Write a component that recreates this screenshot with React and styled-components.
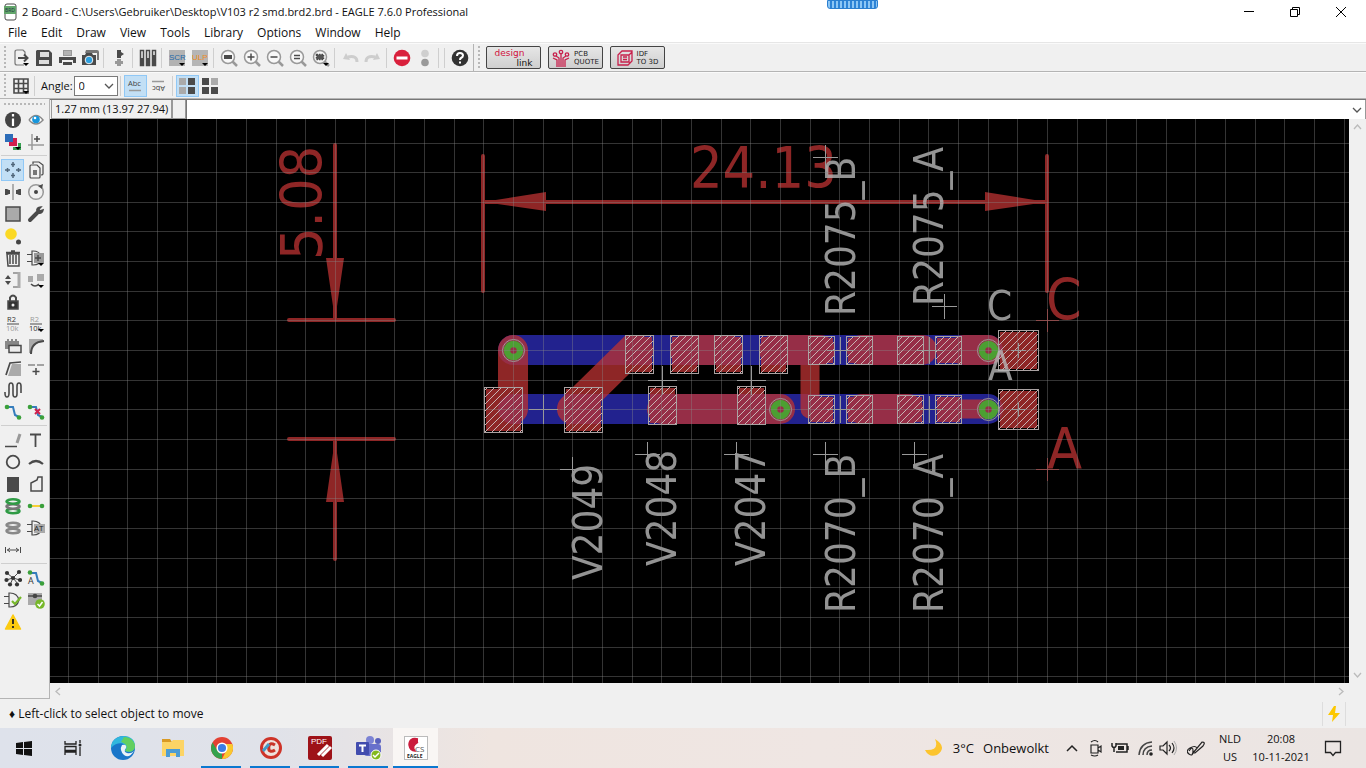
import React from "react";
import styled, { createGlobalStyle } from "styled-components";

const Global = createGlobalStyle`
  * { box-sizing: border-box; }
  body { margin: 0; background: #f0f0f0; color: #111; font: 12px/16px "Open Sans", "Noto Sans", sans-serif; }
  button, input, select { font: inherit; color: inherit; }
  svg { display: block; }
`;

const Shell = styled.div`display: flex; flex-direction: column; min-height: 100vh;`;
const TitleBar = styled.header`
  display: flex; align-items: center; height: 24px; padding: 0 2px 0 4px; background: #fff; position: relative;
`;
const Title = styled.h1`margin: 0 0 0 5px; flex: 1; font-size: 11px; line-height: 16px; font-weight: 400; white-space: nowrap;`;
const DragGrip = styled.div`
  position: absolute; top: 0; left: 827px; width: 51px; height: 9px; border-radius: 0 0 3px 3px; border: 1px solid #2b7fd0;
  background: repeating-linear-gradient(90deg, #8cc6f5 0 2px, #2d83d6 2px 4px);
`;
const WindowButton = styled.button`
  width: 46px; height: 22px; border: 0; padding: 0; background: none; display: grid; place-items: center;
`;
const MenuBar = styled.nav`display: flex; height: 19px; padding-left: 1px; background: #fff; border-bottom: 1px solid #e6e6e6;`;
const MenuButton = styled.button`border: 0; background: none; padding: 0 7px; line-height: 18px;`;
const ToolBar = styled.div`
  display: flex; align-items: center; height: ${p => p.$height}px; border-bottom: 1px solid #b4b4b4; border-top: 1px solid #fafafa;
`;
const Handle = styled.i`
  width: 2px; height: 23px; margin: 0 3px 0 4px; flex: none;
  background: repeating-linear-gradient(180deg, #b8b8b8 0 2px, transparent 2px 4px);
`;
const Tool = styled.button`
  width: 23px; height: 22px; padding: 0; flex: none; display: grid; place-items: center;
  border: 1px solid ${p => (p.$on ? "#90c8f6" : "transparent")}; background: ${p => (p.$on ? "#c2dff5" : "none")};
`;
const Sep = styled.i`width: 1px; height: 20px; margin: 0 3px 0 2px; flex: none; background: #cfcfcf;`;
const GroupEnd = styled.i`width: 1px; height: 27px; margin-left: 2px; background: #b4b4b4;`;
const LinkButton = styled.button`
  display: flex; align-items: center; justify-content: center; gap: 4px; width: 55px; height: 23px; margin-right: 7px; padding: 0;
  border: 1px solid #444; border-radius: 2px; background: linear-gradient(#e6e6e6, #cfcfcf);
  font: 7px/8px "DejaVu Sans", sans-serif; text-align: left; color: #222;
`;
const LinkWords = styled.span`display: flex; flex-direction: column;`;
const DesignWords = styled(LinkWords)`
  width: 38px; font-size: 9px; line-height: 10px; color: #d0103c;
  b { align-self: flex-end; font-weight: 400; color: #111; }
`;
const LinkGap = styled.i`width: 3px;`;
const AngleLabel = styled.label`margin: 0 1px 0 3px; font-size: 11px;`;
const AngleBox = styled.span`
  position: relative; display: flex; width: 44px; height: 20px;
  svg { position: absolute; right: -2px; top: 7px; pointer-events: none; }
`;
const AngleSelect = styled.select`
  appearance: none; width: 100%; border: 1px solid #7a7a7a; border-radius: 0; padding: 0 4px; background: #fff; font-size: 11px;
`;
const Work = styled.div`display: flex; flex: 1;`;
const SideBar = styled.aside`
  width: 50px; flex: none; padding: 2px 2px 0 1px; border-right: 1px solid #b4b4b4; border-bottom: 1px solid #b4b4b4; margin-bottom: 1px;
`;
const SideHandle = styled.div`
  height: 2px; margin: 2px 2px 4px 3px; background: repeating-linear-gradient(90deg, #b8b8b8 0 2px, transparent 2px 4px);
`;
const SideGroup = styled.div`
  display: grid; grid-template-columns: 23px 23px; grid-auto-rows: 22px;
  & + & { border-top: 1px solid #cfcfcf; margin-top: 2px; padding-top: 3px; }
`;
const Main = styled.main`display: flex; flex-direction: column; flex: 1; min-width: 0;`;
const CommandRow = styled.div`display: flex; height: 20px; border-top: 1px solid #777;`;
const Coordinates = styled.output`
  width: 121px; padding: 0 3px; border: 1px solid #999; border-top: 0; font-size: 11px; line-height: 18px; white-space: nowrap; margin-left: 1px;
`;
const CommandMark = styled.i`width: 14px; border: 1px solid #999; border-top: 0;`;
const CommandInput = styled.input`flex: 1; min-width: 0; border: 0; border-left: 1px solid #777; padding: 0 4px; background: #fff; outline: 0;`;
const DropButton = styled.button`width: 18px; border: 0; border-right: 1px solid #999; padding: 0; background: #fff; display: grid; place-items: center;`;
const ViewRow = styled.div`display: flex; flex: 1;`;
const Board = styled.div`
  flex: 1; min-width: 0; background: #000; overflow: hidden; display: flex;
  svg { flex: 1; height: auto; min-width: 0; }
`;
const VScroll = styled.div`width: 17px; display: flex; flex-direction: column; justify-content: space-between;`;
const HScroll = styled.div`height: 17px; display: flex; justify-content: space-between; padding-right: 17px;`;
const ScrollButton = styled.button`width: 17px; height: 17px; border: 0; padding: 0; background: none; display: grid; place-items: center;`;
const Status = styled.footer`display: flex; align-items: center; justify-content: space-between; height: 28px; padding: 0 20px 0 9px;`;
const Bolt = styled.span`height: 24px; padding: 0 3px; border: solid #ddd; border-width: 0 1px; display: grid; place-items: center;`;
const TaskBar = styled.nav`
  display: flex; height: 40px; background: linear-gradient(90deg, #dee2eb 0, #e0e2e9 20%, #efe5e0 36%, #efe6e3 60%, #ebe5e3 100%);
`;
const TaskButton = styled.button`
  width: ${p => p.$width || 49}px; height: 40px; padding: 0; border: 0; display: grid; place-items: center;
  background: ${p => (p.$active ? "#f9f6f4" : "none")}; position: relative;
  &::after { content: ""; position: absolute; bottom: 0; left: ${p => (p.$active ? 0 : 4)}px; right: ${p => (p.$active ? 0 : 5)}px; height: ${p => (p.$open ? 2 : 0)}px; background: #0b78d0; }
`;
const Tray = styled.div`display: flex; align-items: center; margin-left: auto; padding-right: 15px;`;
const TrayButton = styled.button`width: ${p => p.$width || 24}px; height: 40px; padding: 0; border: 0; background: none; display: grid; place-items: center;`;
const Weather = styled.button`display: flex; align-items: center; gap: 9px; padding: 0; border: 0; background: none; margin-right: 12px; font-size: 13px;`;
const Stack = styled.button`
  display: flex; flex-direction: column; align-items: center; width: ${p => p.$width}px; padding: 0; border: 0; background: none; font-size: 11px; line-height: 18px; white-space: nowrap;
`;

const Ico = ({ s = 18, w = s, children }) => (
  <svg width={w} height={s} viewBox={`0 0 ${w} ${s}`} fill="none" stroke="#4a4a4a" strokeWidth="1.5" aria-hidden="true">{children}</svg>
);
const Down = () => <path d="M11 14h6l-3 3z" fill="#000" stroke="none" />;
const F = p => <path stroke="none" fill={p.c || "#4a4a4a"} d={p.d} />;
const Dot = ({ x, y, r = 2.3, c = "#3ba03b" }) => <circle cx={x} cy={y} r={r} fill={c} stroke="none" />;
const Lens = ({ children }) => (
  <Ico><path d="M12 12l5 5" stroke="#999" strokeWidth="2.5" /><circle cx="8" cy="8" r="6.5" stroke="#999" fill="#f8f8f8" />{children}</Ico>
);
const Gate = () => <path d="M5 2h1c5 0 8 3 9 7-1 4-4 7-9 7H5zM0 5.500h5M0 12.500h5" strokeWidth="1.200" />;
const Disks = ({ y, c }) => (
  <g strokeWidth="2.600" stroke={c}><ellipse cx="9" cy={y} rx="6.500" ry="2.200" fill="#f0f0f0" /></g>
);
const Chevron = ({ d, c = "#555", s = 9, w = s }) => <Ico s={s} w={w}><path d={d} stroke={c} strokeWidth="1.300" /></Ico>;

const topTools = [
  ["Open", <Ico><path d="M13 7V3l-2-2H5Q3 1 3 3v11q0 2 2 2h7" strokeWidth="1.200" stroke="#777" /><path d="M6 9h9M12 5.500L15.500 9 12 12.500" strokeWidth="2" /><Down /></Ico>],
  ["Save", <Ico><F d="M1 2l1-1h12l3 3v13H1z" /><F c="#ddd" d="M5 3h9v5H5zM4 11h10v4H4z" /></Ico>],
  ["Print", <Ico><F c="#999" d="M5 1h9v6H5z" /><path d="M6 3h7M6 5h7" stroke="#ccc" strokeWidth="1" /><F d="M1 8h17v6h-3v-3H4v3H1z" /><F d="M5 13h9v3H5z" /></Ico>],
  ["Export", <Ico><F c="#777" d="M5 1h11q2 0 2 2v8h-2V4H4z" /><F d="M1 6h3l1-2h6l1 2h3v10H1z" /><circle cx="8" cy="11" r="3.8" fill="#2da0e0" stroke="#eee" strokeWidth="1" /></Ico>],
  null,
  ["Switch", <Ico><F d="M7 1h4v2l3 2-3 2v2H7z" /><F c="#999" d="M7 10h4v7H7zM5 12h8v3H5z" /></Ico>],
  null,
  ["Library", <Ico><g strokeWidth="1.500" fill="#eee"><rect x="1.500" y="1.500" width="3" height="15" /><rect x="7.500" y="1.500" width="3" height="15" /><rect x="13.500" y="1.500" width="3" height="15" /></g><F d="M1 9h4v7H1zM7 9h4v7H7zM13 6h4v10h-4z" /></Ico>],
  null,
  ["Script", <Ico><F c="#b2b2b2" d="M1 1h16v16H1z" /><text x="1" y="11" fontSize="8" fontFamily="Liberation Sans" stroke="none" fill="#2468a8">SCR</text><Down /></Ico>],
  ["Run ULP", <Ico><F c="#b5b5b5" d="M1 1h16v16H1z" /><text x="1" y="11" fontSize="8" fontFamily="Liberation Sans" stroke="none" fill="#ee8c1c">ULP</text><Down /></Ico>],
  null,
  ["Fit", <Lens><F d="M4 6h8v4H4z" /></Lens>],
  ["Zoom in", <Lens><path d="M8 4.500v7M4.500 8h7" /></Lens>],
  ["Zoom out", <Lens><path d="M4.500 8h7" /></Lens>],
  ["Redraw", <Lens><path d="M5 6.500h6M5 9.500h6" /></Lens>],
  ["Select zoom", <Lens><rect x="4.500" y="5.500" width="7" height="5" fill="#555" strokeDasharray="1.500 1" /><Down /></Lens>],
  null,
  ["Undo", <Ico><path d="M16 13q0-7-9-5" stroke="#cdcdcd" strokeWidth="3" /><F c="#cdcdcd" d="M2 10l3-6 4 7z" /></Ico>],
  ["Redo", <Ico><path d="M2 13q0-7 9-5" stroke="#cdcdcd" strokeWidth="3" /><F c="#cdcdcd" d="M16 10l-3-6-4 7z" /></Ico>],
  null,
  ["Stop", <Ico><circle cx="9" cy="9" r="8.300" fill="#d9203c" stroke="none" /><path d="M3.500 9h11" stroke="#fff" strokeWidth="3" /></Ico>],
  ["Go", <Ico><Dot x={9} y={4.500} r={3.800} c="#cfcfcf" /><Dot x={9} y={13.500} r={3.800} c="#999" /></Ico>],
  null, null,
  ["Help", <Ico><circle cx="9" cy="9" r="8.300" fill="#333" stroke="none" /><path d="M6 7q0-3 3-3t3 2.500q0 1.500-2 2.500-1 .5-1 2M9 12.500v2" stroke="#fff" strokeWidth="2" /></Ico>],
];

const GridIcon = <Ico><path d="M2 2h14v14H2zM2 6.500h14M2 11.500h14M6.500 2v14M11.500 2v14" strokeWidth="1.600" /><Down /></Ico>;

const side = [
  [
    ["Info", <Ico><circle cx="9" cy="9" r="8" fill="#444" stroke="none" /><path d="M9 7.500V15M9 3v2.500" stroke="#fff" strokeWidth="2.200" /></Ico>],
    ["Show", <Ico><path d="M2 9q7-9 14 0-7 8-14 0" stroke="#888" fill="#fff" /><circle cx="9" cy="8.500" r="3.800" fill="#1696dc" stroke="none" /><Dot x={8} y={7} r={1.300} c="#fff" /></Ico>],
    ["Display", <Ico><F c="#d0204c" d="M9 5h4v8H5V9h4z" /><F c="#35a050" d="M14 10h3v7H9v-3h5z" /><F c="#2c6cb8" d="M1 1h8v8H1z" /><Down /></Ico>],
    ["Mark", <Ico><path d="M5 1v16M1 12h16" stroke="#999" /><path d="M10 3v6M7 6h6" /></Ico>],
  ],
  [
    ["Move", <Ico><path d="M9 1v5M9 12v5M1 9h5M12 9h5M7 3.500h4M7 14.500h4M3.500 7v4M14.500 7v4" stroke="#50667a" /></Ico>, true],
    ["Copy", <Ico><path d="M6 3V1h6l4 3v9q0 1-2 1" strokeWidth="1.200" /><path d="M3 5q0-1 1-1h6l3 3v9q0 1-1 1H4q-1 0-1-1z" strokeWidth="1.200" /><F c="#777" d="M6 9h4v5H6z" /></Ico>],
    ["Mirror", <Ico><path d="M9 1v16" stroke="#999" /><F d="M1 6h2l2 1h1v4H5l-2 1H1zM17 6h-2l-2 1h-1v4h1l2 1h2z" /></Ico>],
    ["Rotate", <Ico><circle cx="9" cy="9" r="7.300" stroke="#999" /><Dot x={9} y={9} r={2} c="#444" /><F d="M11 3l5-2-1 5z" /></Ico>],
    ["Group", <Ico><rect x="2" y="2" width="14" height="14" fill="#aaa" /></Ico>],
    ["Change", <Ico><path d="M3 15l7-7" strokeWidth="4" strokeLinecap="round" /><path d="M14 2q-5 0-4 5l1 1q4 1 5-3l-3 1-1-2z" fill="#4a4a4a" /></Ico>],
    ["Paste", <Ico><Dot x={7} y={7} r={5.800} c="#fbd924" /><Dot x={14.500} y={15} r={2.500} c="#444" /></Ico>],
    null,
    ["Delete", <Ico><path d="M3 5h12v12H4zM2 3.500h14M7 2h4M6 6v9M9 6v9M12 6v9" /></Ico>],
    ["Add", <Ico><Gate /><F c="#999" d="M7 4h10v10H7z" /><path d="M11 6v6M8 9h6" /><Down /></Ico>],
    ["Pinswap", <Ico><path d="M9 2h6v14H9" stroke="#888" /><path d="M15 1v16" stroke="#aaa" strokeWidth="3" /><F d="M1 8l3-4 3 4zM1 10h6l-3 4z" /></Ico>],
    ["Replace", <Ico><F c="#aaa" d="M1 5h5v6H1zM10 3h7v7h-7z" /><path d="M4 13q4 4 8 0" /><Down /></Ico>],
    ["Lock", <Ico><rect x="4" y="8" width="10" height="8" fill="#333" /><path d="M6 8V4.500q3-4 6 0V8" strokeWidth="2" /><Dot x={9} y={12} r={1.500} c="#eee" /></Ico>],
    null,
    ["Name", <Ico><text x="3" y="7" fontSize="7.500" stroke="none" fill="#333">R2</text><path d="M3 9h12" strokeWidth="1" /><text x="2" y="16" fontSize="7.500" stroke="none" fill="#999">10k</text></Ico>],
    ["Value", <Ico><text x="3" y="7" fontSize="7.500" stroke="none" fill="#999">R2</text><path d="M3 9h12" strokeWidth="1" /><text x="2" y="16" fontSize="7.500" stroke="none" fill="#333">10k</text><Down /></Ico>],
    ["Smash", <Ico><F c="#888" d="M1 4h2V2h2v2h2V2h2v2h2V2h2v2h2v8H1z" /><rect x="5" y="8.500" width="12" height="7" fill="#eee" /></Ico>],
    ["Miter", <Ico><F c="#aaa" d="M2 2h14v3Q5 6 4 16H2z" /><path d="M4 17Q4 5 17 4" strokeWidth="2" /></Ico>],
    ["Split", <Ico><F c="#aaa" d="M8 5h9v12H4z" /><path d="M2 16L6 4l11-1" strokeWidth="1.700" /></Ico>],
    ["Optimize", <Ico><path d="M1 6h7M10 6h7" stroke="#888" /><path d="M9 9v7M5.500 12.500h7" /></Ico>],
    ["Meander", <Ico><path d="M1 11v1q0 4 2 4t2-4V5q0-3 2-3t2 3v8q0 3 2 3t2-3V5q0-3 2-3t2 3v7" strokeWidth="1.600" /></Ico>],
    null,
    ["Route", <Ico><path d="M3 4h6l2 8 4 2" stroke="#347cbc" strokeWidth="2" /><Dot x={3} y={4} /><Dot x={15} y={14.500} /></Ico>],
    ["Ripup", <Ico><path d="M3 4h6l2 8 4 2" stroke="#347cbc" strokeWidth="2" /><Dot x={3} y={4} /><Dot x={15} y={14.500} /><path d="M8 6l5 5M13 6l-5 5" stroke="#d0204c" strokeWidth="2" /></Ico>],
  ],
  [
    ["Wire", <Ico><path d="M1 15.500h12" /><path d="M13 12l3-9" stroke="#999" strokeWidth="3" /></Ico>],
    ["Text", <Ico><path d="M3 3.500h11M8.500 3v13" strokeWidth="1.800" /></Ico>],
    ["Circle", <Ico><circle cx="9" cy="9" r="6.300" strokeWidth="1.800" /></Ico>],
    ["Arc", <Ico><path d="M2 11q7-6 14 0" strokeWidth="2.200" /></Ico>],
    ["Rectangle", <Ico><F d="M3 2h12v15H3z" /></Ico>],
    ["Polygon", <Ico><path d="M4 16V8l6-3 1-3h4v14z" /></Ico>],
    ["Via", <Ico><Disks y={14} c="#2f9b45" /><Disks y={9.500} c="#777" /><Disks y={4.500} c="#2f9b45" /></Ico>],
    ["Signal", <Ico><path d="M3 9h12" stroke="#f7cf35" strokeWidth="2" /><Dot x={3} y={9} /><Dot x={15} y={9} /></Ico>],
    ["Hole", <Ico><Disks y={12} c="#888" /><Disks y={6} c="#888" /></Ico>],
    ["Attribute", <Ico><Gate /><F c="#aaa" d="M7 5h11v9H7z" /><text x="7" y="12" fontSize="8" stroke="none" fill="#222">AT</text></Ico>],
    ["Dimension", <Ico><path d="M1.500 6v6M16.500 6v6M3 9h12M6 7L3.500 9 6 11M12 7l2.500 2L12 11" strokeWidth="1" /></Ico>],
    null,
  ],
  [
    ["Ratsnest", <Ico><path d="M3 4l6 5 6-6M2 11l7-2 7 2M6 16l3-7 5 6" strokeWidth="1" />{[[3, 4], [15, 3], [9, 9], [2.500, 11], [16, 11], [6, 15.500], [13, 15.500]].map(([x, y]) => <Dot key={x} x={x} y={y} r={2.100} c="#333" />)}</Ico>],
    ["Autorouter", <Ico><path d="M4 4h5l2 8 4 2" stroke="#347cbc" strokeWidth="2" /><Dot x={3} y={3.500} /><Dot x={15} y={14.500} /><text x="1" y="15" fontSize="9" stroke="none" fill="#333">A</text></Ico>],
    ["ERC", <Ico><Gate /><path d="M8 10l3 3 6-7" stroke="#77b82a" strokeWidth="2.200" /></Ico>],
    ["DRC", <Ico><F c="#aaa" d="M1 2h14v12H1z" /><path d="M1 5h14" /><Dot x={8} y={5} r={2.300} c="#444" /><Dot x={13} y={13} r={4.800} c="#77b82a" /><path d="M10.500 13l2 2 3-4" stroke="#fff" /></Ico>],
    ["Errors", <Ico><path d="M9 2l7.500 14h-15z" fill="#fccb10" stroke="#fccb10" strokeLinejoin="round" /><path d="M9 6v5M9 13v2" stroke="#222" strokeWidth="1.800" /></Ico>],
  ],
];

/* Board geometry, in drawing units that start at the top left corner of the window. */
const gridX = Array.from({ length: 90 }, (_, k) => Math.floor(68.4 + 29.67 * k) + 0.5);
const gridY = Array.from({ length: 60 }, (_, k) => Math.floor(143 + 29.65 * k) + 0.5);
const pads = [
  [484, 387, 38, 45], [564, 387, 38, 45],
  [625, 335, 28, 38], [670, 335, 28, 38], [714, 335, 28, 38], [759, 335, 28, 38],
  [648, 386, 28, 38], [737, 386, 28, 38],
  ...[808, 846, 897, 935].flatMap(x => [[x, 336, 26, 28], [x, 395, 26, 28]]),
  [998, 330, 40, 40], [998, 389, 40, 40],
];
const crosses = [
  [543, 409, 14], [662, 380, 14], [751, 380, 14], [840, 350, 13], [840, 409, 13], [929, 350, 13], [929, 409, 13],
  [1018, 350, 7], [1018, 409, 7], [572, 469, 12], [647, 454, 12], [736, 454, 12], [825, 454, 12], [914, 454, 12], [825, 157, 12], [944, 306, 12],
];
const names = [
  ["R2075_B", 855, 316], ["R2075_A", 943, 306], ["V2049", 602, 580], ["V2048", 676, 566], ["V2047", 765, 566],
  ["R2070_B", 855, 613], ["R2070_A", 943, 613],
];
const vias = [[513, 350], [780, 409], [988, 350], [988, 409]];
const cross = ([x, y, r]) => `M${x - r} ${y + 0.5}h${2 * r + 1}M${x + 0.5} ${y - r}v${2 * r + 1}`;
const boardFont = '"DejaVu Sans Condensed", "DejaVu Sans", sans-serif';

function BoardDrawing() {
  return (
    <svg role="img" aria-label="Board layout">
      <defs>
        <pattern id="hatch" width="7" height="7" patternUnits="userSpaceOnUse">
          <path d="M-1 8L8-1M-1 1l2-2M6 8l2-2" stroke="#c9b4b4" strokeWidth="1" />
        </pattern>
      </defs>
      <g transform="translate(-50 -119)">
        <g stroke="#22228e" strokeWidth="30" strokeLinecap="round"><path d="M513 350H988M513 409H988" /></g>
        <g opacity=".76" stroke="#bb3232" strokeWidth="30" strokeLinecap="round" fill="none">
          <path d="M513 350V409M572 409L632 350H638M685 350H728M774 350H820M862 350H922M964 350H988M662 409H780M862 409H908" />
          <path d="M810 350V409M949 409H988" strokeWidth="19" />
          <g stroke="none" fill="#bb3232">{pads.map(([x, y, w, h]) => <rect key={`${x}-${y}`} x={x + 2} y={y + 2} width={w - 3} height={h - 3} />)}</g>
        </g>
        <g fill="url(#hatch)" stroke="#aaa2a2">{pads.map(([x, y, w, h]) => <rect key={`${x}-${y}`} x={x + 0.5} y={y + 0.5} width={w} height={h} />)}</g>
        {vias.map(([x, y]) => (
          <g key={`${x}-${y}`} fill="none">
            <circle cx={x + 0.5} cy={y + 0.5} r="11" stroke="#a09898" />
            <circle cx={x + 0.5} cy={y + 0.5} r="6.500" stroke="#4c9f32" strokeWidth="6.500" />
          </g>
        ))}
        <g stroke="#8e2626" strokeWidth="4" strokeLinecap="round">
          <path d="M335 145V320M289 320H394M289 439H394M335 439V559M483 156V291M1047 156V291M483 202H1047" />
          <path stroke="none" fill="#8e2626" d="M335 320L326 258H344zM335 439L326 502H344zM483 202L546 192V211zM1047 202L985 192V211z" />
        </g>
        <g fill="#8e2626" fontFamily={boardFont} fontSize="57">
          <text x="690" y="188">24.13</text>
          <text transform="translate(322 260) rotate(-90)">5.08</text>
          <text x="1046" y="320">C</text><text x="1047" y="469">A</text>
        </g>
        <path d={cross([1047, 320, 11]) + cross([1047, 469, 11])} stroke="#8e2626" />
        <g fill="#b8b8b8" opacity=".8" fontFamily={boardFont} fontSize="40">
          {names.map(([t, x, y]) => <text key={t} transform={`translate(${x} ${y}) rotate(-90)`}>{t}</text>)}
          <text x="987" y="320">C</text><text x="988" y="380">A</text>
        </g>
        <path d={gridX.map(x => `M${x} 119V2000`).join("") + gridY.map(y => `M50 ${y}H2800`).join("")} stroke="#888" strokeOpacity=".38" />
        <path d={crosses.map(cross).join("")} stroke="#999" />
      </g>
    </svg>
  );
}

const tasks = [
  ["Start", 48, <Ico s={16}><F c="#111" d="M0 3l7-1v6H0zM8 2l8-1v7H8zM0 9h7v6l-7-1zM8 9h8v7l-8-1z" /></Ico>],
  ["Task view", 49, <Ico><path d="M1 2v3h11V2M1 16v-3h11v3M1 7.500h11v4H1zM16 1v3M16 8v9" stroke="#222" strokeWidth="1.300" /><Dot x={16} y={6} r={1.500} c="#222" /></Ico>],
  ["Edge", 51, <Ico s={24}><circle cx="12" cy="12" r="12" fill="#1976c9" stroke="none" /><F c="#31b7dd" d="M0 12C0-3 24-4 24 10c0 5-5 7-10 5 4-8-7-11-14-3z" /><F c="#62cf60" d="M13 1c7 0 11 5 11 9 0 5-5 7-10 5 4-5 0-8-4-9z" /><F c="#eaf2f7" d="M11 9q5-1 4 3-3 4 1 5 4 1 7-2-5 8-10 4-5-5-2-10z" /></Ico>],
  ["Files", 49, <Ico s={22}><F c="#d99a24" d="M0 2h8l2 3H0z" /><F c="#fcd465" d="M0 5h9l2-2h11v16H0z" /><F c="#4c9cd3" d="M4 12h14v8h-4v-4H8v4H4z" /></Ico>],
  ["Chrome", 49, <Ico s={22}><circle cx="11" cy="11" r="11" fill="#e34133" stroke="none" /><F c="#34a24d" d="M1.500 5.500L8 16l3-1v7A11 11 0 0 1 1.500 5.500z" /><F c="#fac92e" d="M11 22l5-10-3-5h8.300A11 11 0 0 1 11 22z" /><circle cx="11" cy="11" r="4.800" fill="#3c7de5" stroke="#fff" /></Ico>, true],
  ["CCleaner", 49, <Ico s={22}><circle cx="11" cy="11" r="9.500" fill="#eee2dd" stroke="#ce3328" strokeWidth="3" /><path d="M15 8q-5-3-6 1t1 5 5-1" stroke="#c83428" strokeWidth="3" /><path d="M3 14l6-7" stroke="#439bc8" strokeWidth="3" /></Ico>, true],
  ["PDF", 49, <Ico s={24}><rect width="24" height="24" rx="2" fill="#9e1218" stroke="none" /><text x="3" y="8" fontSize="8" fontFamily="Liberation Sans" stroke="none" fill="#fff">PDF</text><path d="M10 19L20 9M14 20l9-9" stroke="#fff" strokeWidth="3" /></Ico>, true],
  ["Teams", 49, <Ico s={24} w={26}><Dot x={14} y={4} r={4} c="#7c83d4" /><Dot x={22} y={5} r={3} c="#5961bd" /><rect x="8" y="8" width="17" height="12" rx="3" fill="#6870cb" stroke="none" /><rect y="6" width="13" height="13" rx="1" fill="#424cae" stroke="none" /><path d="M3 9.500h7M6.500 9v7" stroke="#fff" strokeWidth="2" /><circle cx="20" cy="19" r="5" fill="#83b91d" stroke="#fff" strokeWidth="1" /><path d="M17 19l2 2 4-4" stroke="#fff" /></Ico>, true],
  ["EAGLE", 45, <Ico s={24}><rect x=".5" y=".5" width="23" height="23" fill="#fff" stroke="#bbb" strokeWidth="1" /><path d="M14 3Q5 1 5 9q1 6 6 6-4-5 3-9" fill="#ca1c3c" stroke="#ca1c3c" /><text x="11" y="16" fontSize="8" stroke="none" fill="#555">CS</text><text x="3" y="22" fontSize="5" fontWeight="700" stroke="none" fill="#222">EAGLE</text></Ico>, true, true],
];

const tray = [
  ["Show hidden icons", 22, <Ico s={14}><path d="M2 10l5-5 5 5" stroke="#222" /></Ico>],
  ["Camera", 25, <Ico><path d="M4 6h7v8H4zM11 9l3-2v6l-3-2M4 3q4-3 7 0M4 16q4 2 7 0" stroke="#222" strokeWidth="1.200" /></Ico>],
  ["Battery", 24, <Ico><path d="M5 5h11v8H5M17 7v4M1 4v3q2 3 4 0V4M3 9v4" stroke="#222" /><F c="#222" d="M7 7h6v4H7z" /></Ico>],
  ["Network", 25, <Ico s={16}><path d="M2 15Q3 3 15 2M6 15q0-8 9-9M10 15q0-5 5-5" stroke="#444" /><Dot x={14} y={14} r={1.800} c="#222" /></Ico>],
  ["Volume", 22, <Ico><path d="M1 7h3l4-4v12l-4-4H1zM10 6q3 3 0 6M13 4q4 5 0 10" stroke="#222" strokeWidth="1.200" /><path d="M15 2q5 7 0 14" stroke="#aaa" strokeWidth="1" /></Ico>],
  ["Pen", 34, <Ico><path d="M2 12q4-6 4 0t-4 3 1-6 7 0M6 14L15 3q4 0 1 4L8 14z" stroke="#222" strokeWidth="1.200" /></Ico>],
];

const menus = ["File", "Edit", "Draw", "View", "Tools", "Library", "Options", "Window", "Help"];

export default function App() {
  return (
    <Shell>
      <Global />
      <TitleBar>
        <Ico w={13}><rect x="1" y="1" width="11" height="16" rx="2" fill="#fff" strokeWidth="1" /><F c="#62a66b" d="M0 3h12v8H0z" /><text x="1" y="9" fontSize="5" stroke="none" fill="#234">BRD</text></Ico>
        <Title>2 Board - C:\Users\Gebruiker\Desktop\V103 r2 smd.brd2.brd - EAGLE 7.6.0 Professional</Title>
        <DragGrip />
        <WindowButton aria-label="Minimize"><Ico s={12}><path d="M1 5.500h10" stroke="#000" strokeWidth="1" /></Ico></WindowButton>
        <WindowButton aria-label="Restore"><Ico s={12}><path d="M1.500 3.500h7v7h-7zM3.500 3.500v-2h7v7h-2" stroke="#000" strokeWidth="1" /></Ico></WindowButton>
        <WindowButton aria-label="Close"><Ico s={12}><path d="M1 1l10 10M11 1L1 11" stroke="#000" strokeWidth="1" /></Ico></WindowButton>
      </TitleBar>
      <MenuBar>{menus.map(m => <MenuButton key={m}>{m}</MenuButton>)}</MenuBar>
      <ToolBar $height={29}>
        <Handle />
        {topTools.map((t, i) => (t ? <Tool key={t[0]} aria-label={t[0]}>{t[1]}</Tool> : <Sep key={i} />))}
        <GroupEnd /><Handle /><LinkGap />
        <LinkButton><DesignWords>design<b>link</b></DesignWords></LinkButton>
        <LinkButton>
          <Ico><g stroke="#c8204c" strokeWidth="1.300"><path d="M9 5v13M7 18V9L4 7M11 18V9l3-2M5 18v-7L1 9M13 18v-7l4-2" /><circle cx="9" cy="3" r="1.700" /><circle cx="3" cy="5.500" r="1.700" /><circle cx="15" cy="5.500" r="1.700" /></g></Ico>
          <LinkWords><span>PCB</span><span>QUOTE</span></LinkWords>
        </LinkButton>
        <LinkButton>
          <Ico s={16}><path d="M1 5l4-4h10v10l-4 4H1zM4 5h8v7H4zM12 5l3-3M6 7h4M6 9.500h4" stroke="#c8204c" strokeWidth="1.300" /></Ico>
          <LinkWords><span>IDF</span><span>TO 3D</span></LinkWords>
        </LinkButton>
      </ToolBar>
      <ToolBar $height={27}>
        <Handle />
        <Tool aria-label="Grid">{GridIcon}</Tool><Sep />
        <AngleLabel htmlFor="angle">Angle:</AngleLabel>
        <AngleBox>
          <AngleSelect id="angle" defaultValue="0"><option>0</option><option>90</option><option>180</option><option>270</option></AngleSelect>
          <Chevron d="M1 1l4 4 4-4" w={16} />
        </AngleBox>
        <Sep />
        <Tool $on aria-label="Normal text"><Ico><text x="2" y="9" fontSize="7.500" stroke="none" fill="#444">Abc</text><path d="M3 13.500h12" stroke="#999" /></Ico></Tool>
        <Tool aria-label="Spin text"><Ico><g transform="rotate(180 9 9)"><text x="2" y="9" fontSize="7.500" stroke="none" fill="#444">Abc</text><path d="M3 13.500h12" stroke="#999" /></g></Ico></Tool>
        <Sep />
        <Tool $on aria-label="Align left"><Ico><F c="#aaa" d="M1 1h7v7H1zM1 10h7v7H1z" /><F d="M10 1h7v7h-7zM10 10h7v7h-7z" /></Ico></Tool>
        <Tool aria-label="Align right"><Ico><F d="M1 1h7v7H1zM1 10h7v7H1zM10 10h7v7h-7z" /><F c="#aaa" d="M10 1h7v7h-7z" /></Ico></Tool>
      </ToolBar>
      <Work>
        <SideBar>
          <SideHandle />
          {side.map((g, i) => (
            <SideGroup key={i}>
              {g.map((t, k) => (t ? <Tool key={k} aria-label={t[0]} $on={t[2]}>{t[1]}</Tool> : <span key={k} />))}
            </SideGroup>
          ))}
        </SideBar>
        <Main>
          <CommandRow>
            <Coordinates>1.27 mm (13.97 27.94)</Coordinates>
            <CommandMark />
            <CommandInput aria-label="Command" />
            <DropButton aria-label="Command history"><Chevron d="M1 3l4 4 4-4" s={10} /></DropButton>
          </CommandRow>
          <ViewRow>
            <Board><BoardDrawing /></Board>
            <VScroll>
              <ScrollButton aria-label="Scroll up"><Chevron d="M1 6l3.500-4L8 6" c="#bbb" /></ScrollButton>
              <ScrollButton aria-label="Scroll down"><Chevron d="M1 3l3.500 4L8 3" c="#bbb" /></ScrollButton>
            </VScroll>
          </ViewRow>
          <HScroll>
            <ScrollButton aria-label="Scroll left"><Chevron d="M6 1L2 4.500 6 8" c="#bbb" /></ScrollButton>
            <ScrollButton aria-label="Scroll right"><Chevron d="M3 1l4 3.500L3 8" c="#bbb" /></ScrollButton>
          </HScroll>
        </Main>
      </Work>
      <Status>
        <span>♦ Left-click to select object to move</span>
        <Bolt><Ico s={16}><F c="#fcc800" d="M8 0L2 9h5l-1 7 8-9H9l1-7z" /></Ico></Bolt>
      </Status>
      <TaskBar>
        {tasks.map(([n, w, icon, open, active]) => <TaskButton key={n} aria-label={n} $width={w} $open={open} $active={active}>{icon}</TaskButton>)}
        <Tray>
          <Weather><Ico s={20}><F c="#fcc42e" d="M11 1q5 12-10 11 4 8 12 5Q24 9 11 1z" /></Ico><span>3°C</span><span>Onbewolkt</span></Weather>
          {tray.map(([n, w, icon]) => <TrayButton key={n} aria-label={n} $width={w}>{icon}</TrayButton>)}
          <Stack $width={34}><span>NLD</span><span>US</span></Stack>
          <Stack $width={68}><span>20:08</span><span>10-11-2021</span></Stack>
          <TrayButton aria-label="Notifications" $width={36}><Ico><path d="M1.500 2.500h15v11h-5L9 16.500l-2.500-3h-5z" stroke="#222" strokeWidth="1.300" /></Ico></TrayButton>
        </Tray>
      </TaskBar>
    </Shell>
  );
}
